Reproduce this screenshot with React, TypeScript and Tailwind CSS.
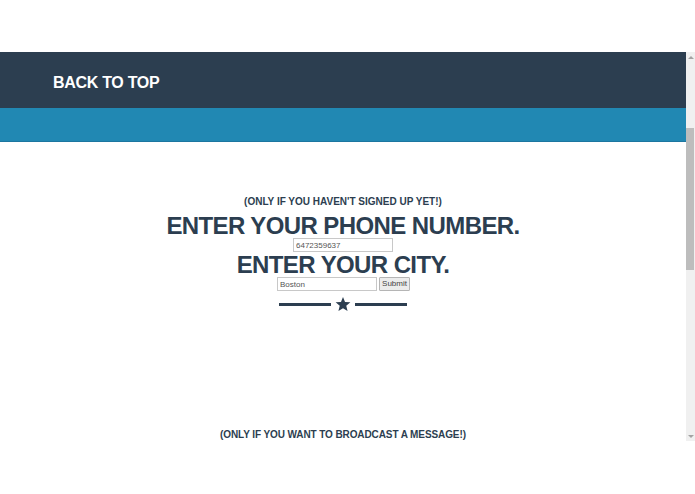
export default function App() {
  const font = { fontFamily: '"Liberation Sans", Arial, sans-serif' };
  return (
    <div className="h-[494px] w-[695px] overflow-hidden bg-white pt-[52px]" style={font}>
      <div className="flex h-[389px]">
        <div className="flex w-[686px] flex-col overflow-hidden">
          <div className="flex h-[56px] shrink-0 items-center bg-[#2c3e50] pl-[53px] pt-[5px]">
            <span className="text-[16px] font-bold leading-none tracking-[-0.3px] text-white">BACK TO TOP</span>
          </div>
          <div className="h-[34px] shrink-0 border-b border-[#1c76a0] bg-[#2188b3]" />
          <div className="flex flex-col items-center pt-[54px] text-[#2c3e50]">
            <p className="text-[10px] font-bold leading-[12px]">(ONLY IF YOU HAVEN'T SIGNED UP YET!)</p>
            <h1 className="mt-[6px] text-[24px] font-bold leading-[24px] tracking-[-0.6px]">ENTER YOUR PHONE NUMBER.</h1>
            <input
              readOnly
              value="6472359637"
              className="h-[14px] w-[100px] border border-[#c8c8c8] bg-white px-[2px] text-[8px] leading-none text-[#555]"
            />
            <h1 className="mt-[1px] text-[24px] font-bold leading-[24px] tracking-[-0.6px]">ENTER YOUR CITY.</h1>
            <div className="flex items-center gap-[2px] pl-[1px]">
              <input
                readOnly
                value="Boston"
                className="h-[14px] w-[100px] border border-[#c8c8c8] bg-white px-[2px] text-[8px] leading-none text-[#555]"
              />
              <button className="h-[14px] w-[31px] rounded-[1px] border border-[#b5b5b5] bg-[#ececec] text-[8px] leading-none text-[#444]">
                Submit
              </button>
            </div>
            <div className="mt-[6px] flex items-center gap-[4px]">
              <div className="h-[3px] w-[52px] bg-[#2c3e50]" />
              <svg width="16" height="15" viewBox="0 0 24 23" className="fill-[#2c3e50]">
                <path d="M12 0l3.1 7.6 8.2.6-6.3 5.3 2 8-7-4.4-7 4.4 2-8L.7 8.2l8.2-.6z" />
              </svg>
              <div className="h-[3px] w-[52px] bg-[#2c3e50]" />
            </div>
            <p className="mt-[117px] text-[10px] font-bold leading-[12px] tracking-[-0.1px]">(ONLY IF YOU WANT TO BROADCAST A MESSAGE!)</p>
          </div>
        </div>
        <div className="flex w-[9px] flex-col bg-[#f0f0f0]">
          <div className="flex h-[10px] items-center justify-center">
            <div className="h-0 w-0 border-x-[3px] border-b-[3px] border-x-transparent border-b-[#a3a3a3]" />
          </div>
          <div className="mt-[66px] h-[142px] w-[8px] bg-[#bdbdbd]" />
          <div className="flex-1" />
          <div className="flex h-[10px] items-center justify-center">
            <div className="h-0 w-0 border-x-[3px] border-t-[3px] border-x-transparent border-t-[#a3a3a3]" />
          </div>
        </div>
      </div>
    </div>
  );
}
